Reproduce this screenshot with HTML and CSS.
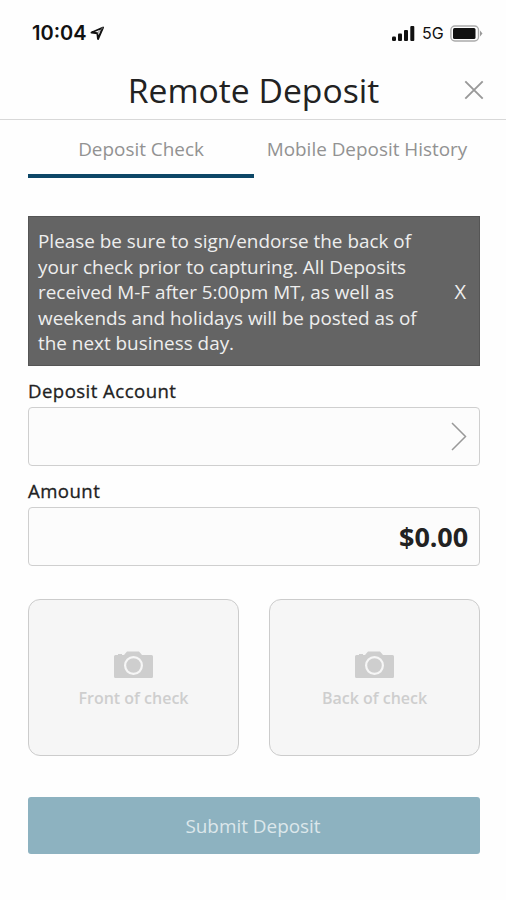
FILE: index.html
```
<!DOCTYPE html>
<html lang="en">
<head>
<meta charset="utf-8">
<title>Remote Deposit</title>
<link rel="stylesheet" href="styles.css">
</head>
<body>
<div class="status">
  <span class="time">10:04</span>
  <svg class="loc" width="15" height="15" viewBox="0 0 15 15"><path d="M1.500 6.500 13 1.500 8 13 7.300 7.200Z" fill="none" stroke="#111" stroke-width="1.900" stroke-linejoin="round"/><path d="M7.300 7.200 13 1.500" stroke="#777" stroke-width="1"/></svg>
  <svg class="signal" width="23" height="15" viewBox="0 0 23 15" fill="#111"><rect x="0" y="10.500" width="4" height="4.500" rx="1.200"/><rect x="6" y="7.500" width="4" height="7.500" rx="1"/><rect x="12" y="4" width="4" height="11" rx="1"/><rect x="18.300" y="0" width="4" height="15" rx="1"/></svg>
  <span class="net">5G</span>
  <svg class="battery" width="33" height="17" viewBox="0 0 33 17"><rect x=".9" y="1" width="27.600" height="15" rx="4" fill="none" stroke="#aaa" stroke-width="1.400"/><rect x="3" y="3" width="22.500" height="11" rx="1.500" fill="#111"/><path d="M30 5.500v6L32.500 8.500Z" fill="#999"/></svg>
</div>
<header class="header">
  <h1>Remote Deposit</h1>
  <svg class="close" width="20" height="20" viewBox="0 0 20 20"><path d="M1.300 1.300 18.700 18.700M18.700 1.300 1.300 18.700" stroke="#999" stroke-width="1.900"/></svg>
</header>
<main>
  <nav class="tabs"><a class="tab active">Deposit Check</a><a class="tab">Mobile Deposit History</a></nav>
  <section class="notice">
    <p>Please be sure to sign/endorse the back of<br>your check prior to capturing. All Deposits<br>received M-F after 5:00pm MT, as well as<br>weekends and holidays will be posted as of<br>the next business day.</p>
    <span class="dismiss">X</span>
  </section>
  <div class="label account">Deposit Account</div>
  <div class="field"><svg width="16" height="29" viewBox="0 0 16 29"><path d="M1 1 14.500 14.500 1 28" fill="none" stroke="#999" stroke-width="1.500"/></svg></div>
  <div class="label amount">Amount</div>
  <div class="field value"><strong>$0.00</strong></div>
  <div class="photos">
    <div class="photo"><svg width="39" height="27" viewBox="0 0 39 27"><path fill="#cecece" fill-rule="evenodd" d="M1.500 4H4V3H8V4H10L13 .500H25L28 4H37.500Q39 4 39 5.500V25.500Q39 27 37.500 27H1.500Q0 27 0 25.500V5.500Q0 4 1.500 4ZM19.500 5A9.500 9.500 0 1 0 19.500 24 9.500 9.500 0 1 0 19.500 5ZM19.500 7.200A7.300 7.300 0 1 1 19.500 21.800 7.300 7.300 0 1 1 19.500 7.200Z"/></svg><span>Front of check</span></div>
    <div class="photo"><svg width="39" height="27" viewBox="0 0 39 27"><path fill="#cecece" fill-rule="evenodd" d="M1.500 4H4V3H8V4H10L13 .500H25L28 4H37.500Q39 4 39 5.500V25.500Q39 27 37.500 27H1.500Q0 27 0 25.500V5.500Q0 4 1.500 4ZM19.500 5A9.500 9.500 0 1 0 19.500 24 9.500 9.500 0 1 0 19.500 5ZM19.500 7.200A7.300 7.300 0 1 1 19.500 21.800 7.300 7.300 0 1 1 19.500 7.200Z"/></svg><span>Back of check</span></div>
  </div>
  <button class="submit">Submit Deposit</button>
</main>
</body>
</html>
```
FILE: styles.css
```
* { box-sizing: border-box; }
body { margin: 0; width: 506px; height: 900px; background: #fefefe; color: #222; font-family: "Open Sans", sans-serif; overflow: hidden; }
.status { height: 66px; display: flex; align-items: center; padding: 0 23px 0 32px; font-family: Inter, sans-serif; color: #111; }
.time { font-size: 20px; font-weight: 600; width: 57px; white-space: nowrap; }
.loc { margin-left: 1px; }
.signal { margin-left: auto; }
.net { font-size: 16px; letter-spacing: .2px; margin: 0 6px 0 7px; }
.header { height: 54px; border-bottom: 1px solid #d8d8d8; display: grid; grid-template-columns: 30px 1fr 30px; align-items: center; padding: 0 17px 5px 18px; }
h1 { grid-column: 2; margin: 0; text-align: center; font-size: 33.7px; font-weight: 400; line-height: 48px; white-space: nowrap; }
.close { justify-self: center; }
main { padding: 0 26px 0 28px; }
.tabs { height: 58px; display: grid; grid-template-columns: 226px 226px; }
.tab { height: 58px; text-align: center; font-size: 18.9px; line-height: 59px; color: #929292; white-space: nowrap; }
.tab.active { border-bottom: 4px solid #0d4767; }
.notice { margin-top: 38px; height: 150px; background: #646464; border: 1px solid #555; color: #eee; display: flex; align-items: center; justify-content: space-between; padding: 2px 13px 0 9px; }
.notice p { margin: 2px 0 0; font-size: 18.9px; line-height: 25.6px; white-space: nowrap; }
.dismiss { font-size: 20px; margin-bottom: 2px; }
.label { font-size: 18.6px; letter-spacing: .45px; line-height: 24px; font-weight: 500; -webkit-text-stroke: .3px #222; }
.account { margin: 13px 0 4px; }
.amount { margin: 13px 0 4px; }
.field { height: 59px; border: 1px solid #cfcfcf; border-radius: 4px; background: #fcfcfc; display: flex; align-items: center; justify-content: flex-end; padding: 0 12px; }
.field.value { padding-right: 11px; }
.field strong { font-size: 27px; letter-spacing: -.1px; }
.photos { margin-top: 33px; display: grid; grid-template-columns: 211px 211px; justify-content: space-between; }
.photo { height: 157px; border: 1px solid #ccc; border-radius: 12px; background: #f6f6f6; display: flex; flex-direction: column; align-items: center; padding-top: 51px; color: #cecece; font-size: 16px; font-weight: 600; }
.photo span { line-height: 22px; margin-top: 9px; }
.submit { display: block; margin-top: 41px; padding: 0 2px 0 0; width: 452px; height: 57px; border: 0; border-radius: 3px; background: #8db2c0; color: #dce7eb; font: 18.9px "Open Sans", sans-serif; }
```
